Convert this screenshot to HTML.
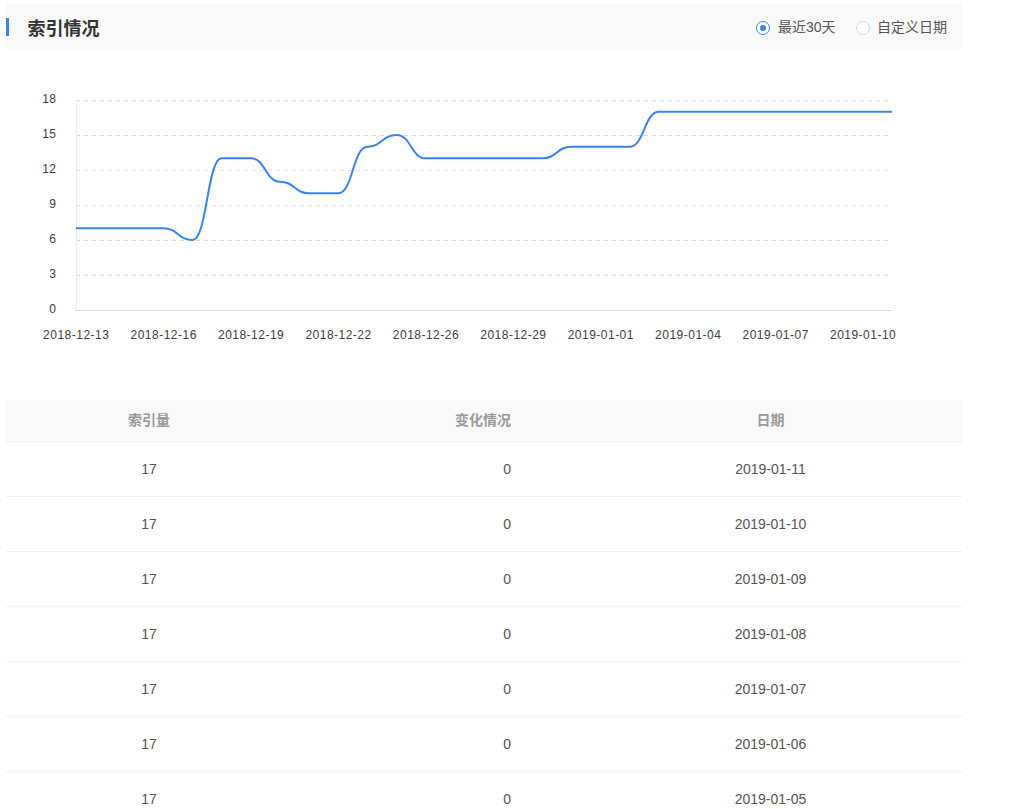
<!DOCTYPE html>
<html lang="zh-CN">
<head>
<meta charset="utf-8">
<title>索引情况</title>
<style>
html,body{margin:0;padding:0;background:#fff;}
body{width:1021px;height:809px;position:relative;overflow:hidden;font-family:"Liberation Sans","Noto Sans CJK SC",sans-serif;color:#555;}
.hd{position:absolute;left:6px;top:4px;width:956px;height:46px;background:#f9f9f9;}
.hd .bar{position:absolute;left:0;top:14px;width:3px;height:18px;background:#3b82f6;}
.hd .title{position:absolute;left:21.5px;top:1.5px;height:46px;line-height:46px;font-size:18px;font-weight:bold;color:#333;letter-spacing:0;}
.radio{position:absolute;top:17px;width:12px;height:12px;border:1px solid #d9d9d9;border-radius:50%;background:#fff;}
.radio.on{border-color:#3b82f6;}
.radio.on::after{content:"";position:absolute;left:3px;top:3px;width:6px;height:6px;border-radius:50%;background:#3b82f6;}
.rl{position:absolute;top:0;height:46px;line-height:46px;font-size:14px;color:#555;white-space:nowrap;}
svg{position:absolute;left:0;top:0;}
svg text{font-family:"Liberation Sans","Noto Sans CJK SC",sans-serif;font-size:12px;fill:#404040;}
.th{position:absolute;left:6px;top:400px;width:956px;height:42px;background:#f9f9f9;border-bottom:1px solid #f0f0f0;box-sizing:border-box;font-size:14px;font-weight:bold;color:#999;line-height:40px;}
.th span,.row span{position:absolute;top:0;white-space:nowrap;}
.row{position:absolute;left:6px;width:956px;height:55px;border-bottom:1px solid #f0f0f0;box-sizing:border-box;font-size:14px;color:#555;line-height:55px;}
.c1{left:93px;width:100px;text-align:center;}
.c2{left:405px;width:100px;text-align:right;}
.c3{left:714.5px;width:100px;text-align:center;}
</style>
</head>
<body>
<div class="hd">
  <div class="bar"></div>
  <div class="title">索引情况</div>
  <div class="radio on" style="left:750px"></div>
  <div class="rl" style="left:772px">最近30天</div>
  <div class="radio" style="left:850px"></div>
  <div class="rl" style="left:871px">自定义日期</div>
</div>
<svg width="1021" height="400" viewBox="0 0 1021 400">
<line x1="76" y1="100.5" x2="892" y2="100.5" stroke="#dcdcdc" stroke-width="1" stroke-dasharray="4 4"/>
<line x1="76" y1="135.5" x2="892" y2="135.5" stroke="#dcdcdc" stroke-width="1" stroke-dasharray="4 4"/>
<line x1="76" y1="170.5" x2="892" y2="170.5" stroke="#dcdcdc" stroke-width="1" stroke-dasharray="4 4"/>
<line x1="76" y1="205.5" x2="892" y2="205.5" stroke="#dcdcdc" stroke-width="1" stroke-dasharray="4 4"/>
<line x1="76" y1="240.5" x2="892" y2="240.5" stroke="#dcdcdc" stroke-width="1" stroke-dasharray="4 4"/>
<line x1="76" y1="275.5" x2="892" y2="275.5" stroke="#dcdcdc" stroke-width="1" stroke-dasharray="4 4"/>

<line x1="76.5" y1="99.5" x2="76.5" y2="310.5" stroke="#ebebeb" stroke-width="1"/>
<line x1="75.3" y1="310.5" x2="892.4" y2="310.5" stroke="#dedede" stroke-width="1"/>
<text x="56" y="102.5" text-anchor="end" textLength="13.8" lengthAdjust="spacing">18</text>
<text x="56" y="137.5" text-anchor="end" textLength="13.8" lengthAdjust="spacing">15</text>
<text x="56" y="172.5" text-anchor="end" textLength="13.8" lengthAdjust="spacing">12</text>
<text x="56" y="207.5" text-anchor="end">9</text>
<text x="56" y="242.5" text-anchor="end">6</text>
<text x="56" y="277.5" text-anchor="end">3</text>
<text x="56" y="312.5" text-anchor="end">0</text>

<text x="76.00" y="339" text-anchor="middle" textLength="65.8" lengthAdjust="spacing">2018-12-13</text>
<text x="163.43" y="339" text-anchor="middle" textLength="65.8" lengthAdjust="spacing">2018-12-16</text>
<text x="250.86" y="339" text-anchor="middle" textLength="65.8" lengthAdjust="spacing">2018-12-19</text>
<text x="338.29" y="339" text-anchor="middle" textLength="65.8" lengthAdjust="spacing">2018-12-22</text>
<text x="425.71" y="339" text-anchor="middle" textLength="65.8" lengthAdjust="spacing">2018-12-26</text>
<text x="513.14" y="339" text-anchor="middle" textLength="65.8" lengthAdjust="spacing">2018-12-29</text>
<text x="600.57" y="339" text-anchor="middle" textLength="65.8" lengthAdjust="spacing">2019-01-01</text>
<text x="688.00" y="339" text-anchor="middle" textLength="65.8" lengthAdjust="spacing">2019-01-04</text>
<text x="775.43" y="339" text-anchor="middle" textLength="65.8" lengthAdjust="spacing">2019-01-07</text>
<text x="862.86" y="339" text-anchor="middle" textLength="65.8" lengthAdjust="spacing">2019-01-10</text>

<path d="M76.00 228.33L105.14 228.33L134.29 228.33L163.43 228.33C178.00 228.33 178.00 240.00 192.57 240.00C207.14 240.00 207.14 158.33 221.71 158.33L250.86 158.33C265.43 158.33 265.43 181.67 280.00 181.67C294.57 181.67 294.57 193.33 309.14 193.33L338.29 193.33C352.86 193.33 352.86 146.67 367.43 146.67C382.00 146.67 382.00 135.00 396.57 135.00C411.14 135.00 411.14 158.33 425.71 158.33L454.86 158.33L484.00 158.33L513.14 158.33L542.29 158.33C556.86 158.33 556.86 146.67 571.43 146.67L600.57 146.67L629.71 146.67C644.29 146.67 644.29 111.67 658.86 111.67L688.00 111.67L717.14 111.67L746.29 111.67L775.43 111.67L804.57 111.67L833.71 111.67L862.86 111.67L892.00 111.67" fill="none" stroke="#3b82f6" stroke-width="2" stroke-linejoin="round" stroke-linecap="butt"/>
</svg>
<div class="th"><span class="c1">索引量</span><span class="c2">变化情况</span><span class="c3">日期</span></div>
<div class="row" style="top:442px"><span class="c1">17</span><span class="c2">0</span><span class="c3">2019-01-11</span></div>
<div class="row" style="top:497px"><span class="c1">17</span><span class="c2">0</span><span class="c3">2019-01-10</span></div>
<div class="row" style="top:552px"><span class="c1">17</span><span class="c2">0</span><span class="c3">2019-01-09</span></div>
<div class="row" style="top:607px"><span class="c1">17</span><span class="c2">0</span><span class="c3">2019-01-08</span></div>
<div class="row" style="top:662px"><span class="c1">17</span><span class="c2">0</span><span class="c3">2019-01-07</span></div>
<div class="row" style="top:717px"><span class="c1">17</span><span class="c2">0</span><span class="c3">2019-01-06</span></div>
<div class="row" style="top:772px"><span class="c1">17</span><span class="c2">0</span><span class="c3">2019-01-05</span></div>

</body>
</html>
